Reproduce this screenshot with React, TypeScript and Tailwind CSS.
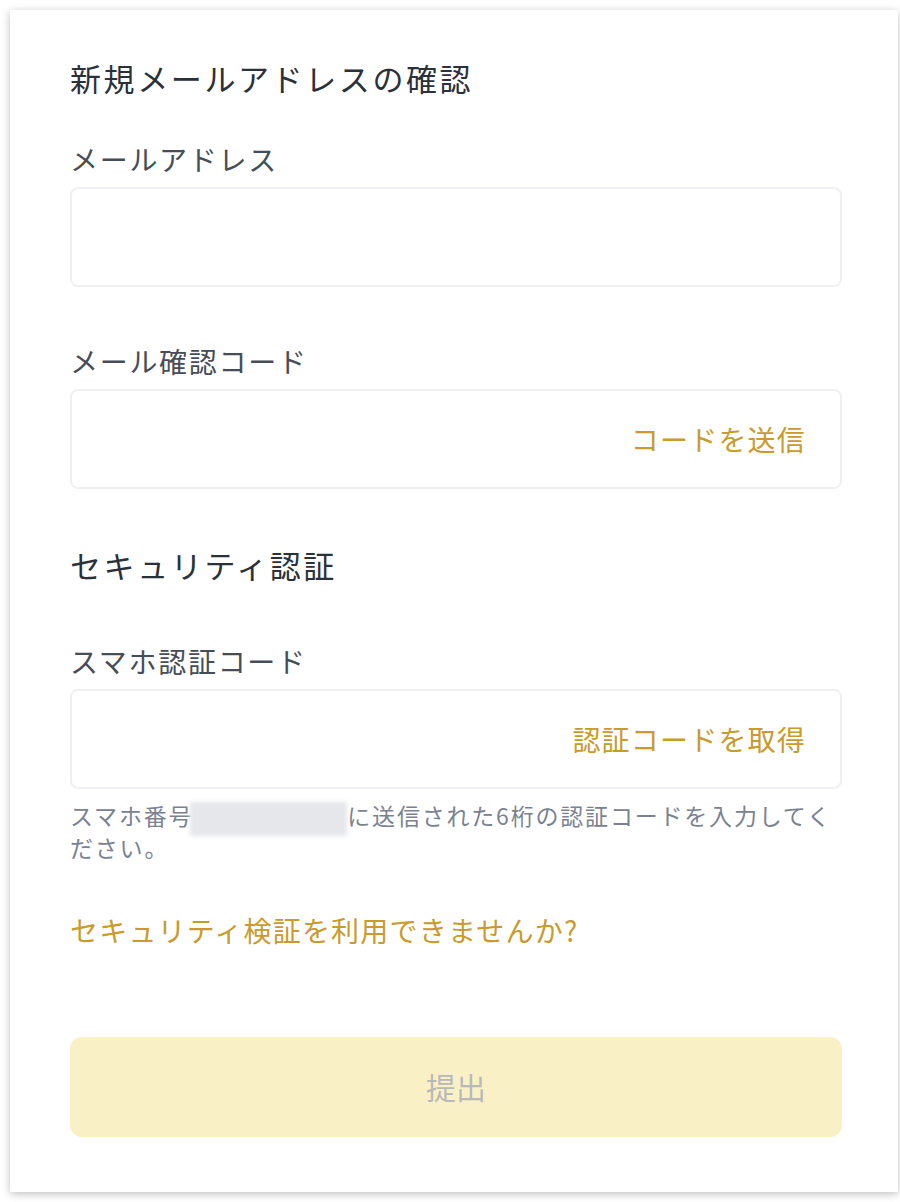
const font = { fontFamily: '"Noto Sans CJK JP", "Noto Sans", sans-serif' };

const Label = ({ children, className = "" }: { children: React.ReactNode; className?: string }) => (
  <p className={`text-[28px] leading-[36px] tracking-[1.7px] text-[#474d57] ${className}`}>{children}</p>
);

const Field = ({ action }: { action?: string }) => (
  <div className="mt-[10px] h-[100px] rounded-lg border-2 border-[#eef0f3] bg-white flex items-center justify-end pr-[34px]">
    {action && (
      <span className="text-[28px] tracking-[1.2px] text-[#c99a2e]">{action}</span>
    )}
  </div>
);

const App = () => {
  return (
    <div className="min-h-[1202px] w-[900px] bg-white pt-[10px] pl-[10px]" style={font}>
      <div className="w-[888px] h-[1182px] bg-white shadow-[0_2px_8px_rgba(0,0,0,0.25)] pl-[60px] pr-[56px] pt-[48px]">
        <h1 className="text-[31px] leading-[40px] tracking-[2.6px] text-[#2b3139]">
          新規メールアドレスの確認
        </h1>

        <Label className="mt-[43px]">メールアドレス</Label>
        <Field />

        <Label className="mt-[56px]">メール確認コード</Label>
        <Field action="コードを送信" />

        <h2 className="mt-[56px] text-[31px] leading-[40px] tracking-[2.6px] text-[#2b3139]">
          セキュリティ認証
        </h2>

        <Label className="mt-[58px]">スマホ認証コード</Label>
        <Field action="認証コードを取得" />

        <p className="mt-[11px] text-[23px] leading-[30px] tracking-[1.8px] text-[#7a8290]">
          スマホ番号
          <span className="inline-block align-middle w-[157px] h-[34px] -my-[4px] -ml-[3px] bg-[#e6e7ea] blur-[2px]" />
          に送信された6桁の認証コードを入力してく
          <br />
          ださい。
        </p>

        <p className="mt-[50px] text-[28px] leading-[36px] tracking-[1.2px] text-[#c99a2e]">
          セキュリティ検証を利用できませんか?
        </p>

        <button className="mt-[89px] w-full h-[100px] rounded-xl bg-[#faf0c6] text-[30px] text-[#b9b9b9]">
          提出
        </button>
      </div>
    </div>
  );
};

export default App;
